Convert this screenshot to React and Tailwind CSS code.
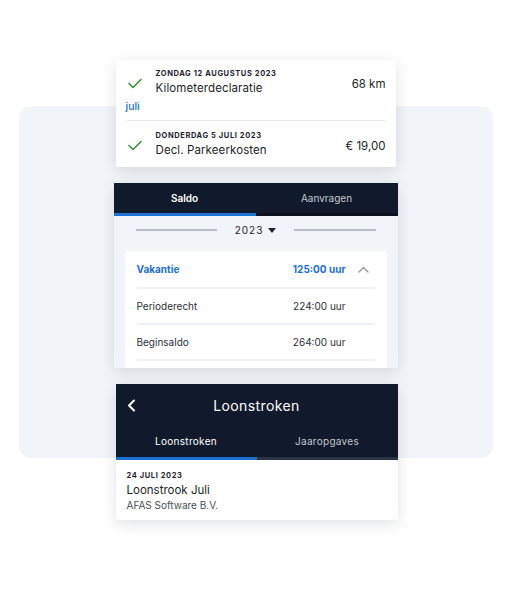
import React from "react";

// Three stacked AFAS-style app cards over a light rounded backdrop.
const font = { fontFamily: "Inter, 'Noto Sans', sans-serif" };

function Check() {
    return (
        <svg width="14" height="11" viewBox="0 0 14 11" fill="none">
            <path d="M1 5.5 L5 9.5 L13 1.5" stroke="#2f8a2f" strokeWidth="1.5" strokeLinecap="round" strokeLinejoin="round" />
        </svg>
    );
}

function Declaration({ date, title, amount, pt }) {
    return (
        <div className={`flex items-start ${pt}`}>
            <div className="w-[30px] pl-[2px] pt-[10px]">
                <Check />
            </div>
            <div className="flex-1">
                <div className="text-[7.5px] leading-[12px] font-bold tracking-[0.6px] text-[#1f2430]">{date}</div>
                <div className="text-[11.5px] leading-[16px] tracking-[0.1px] text-[#1b1f27]">{title}</div>
            </div>
            <div className="text-[11.5px] leading-[16px] text-[#1b1f27] mt-[8px]">{amount}</div>
        </div>
    );
}

function SaldoRow({ label, value, accent, chevron, h }) {
    const tone = accent ? "font-bold text-[#1c6fd1]" : "text-[#2a2f38]";
    return (
        <>
            <div className={`flex items-center ${h}`}>
                <div className={`flex-1 text-[10px] ${tone}`}>{label}</div>
                <div className={`text-[10px] ${tone}`}>{value}</div>
                <div className="w-[29px] flex justify-end pr-[6px]">
                    {chevron ? (
                        <svg width="11" height="7" viewBox="0 0 11 7" fill="none">
                            <path d="M1 6 L5.5 1.5 L10 6" stroke="#8b9099" strokeWidth="1.3" strokeLinecap="round" strokeLinejoin="round" />
                        </svg>
                    ) : null}
                </div>
            </div>
            <div className="h-[2px] bg-[#eef1f5]" />
        </>
    );
}

export default function App() {
    return (
        <div className="relative w-[511px] h-[600px] bg-white overflow-hidden" style={font}>
            {/* backdrop */}
            <div className="absolute left-[19px] top-[106px] w-[474px] h-[352px] rounded-[12px] bg-[#f1f4f8]" />

            <div className="relative flex flex-col items-center pt-[60px]">
                {/* Declaraties */}
                <div className="w-[280px] bg-white px-[10px] shadow-[0_4px_14px_rgba(20,30,50,0.13)]">
                    <div className="h-[40px]">
                        <Declaration pt="pt-[8px]" date="ZONDAG 12 AUGUSTUS 2023" title="Kilometerdeclaratie" amount="68 km" />
                    </div>
                    <div className="h-[14px] text-[10.5px] leading-[14px] font-medium text-[#1c6fd1]">juli</div>
                    <div className="mt-[6px] h-px bg-[#e6ebf1]" />
                    <div className="h-[46px]">
                        <Declaration pt="pt-[9px]" date="DONDERDAG 5 JULI 2023" title="Decl. Parkeerkosten" amount="€ 19,00" />
                    </div>
                </div>

                {/* Saldo */}
                <div className="mt-[16px] w-[284px] h-[185px] overflow-hidden bg-[#f1f4f8] shadow-[0_4px_14px_rgba(20,30,50,0.13)]">
                    <div className="flex h-[33px] bg-[#111a2c]">
                        <div className="flex-1 flex items-center justify-center border-b-[3px] border-[#1c72d4] text-[10px] font-semibold text-white">Saldo</div>
                        <div className="flex-1 flex items-center justify-center border-b-[3px] border-[#0b1220] text-[10px] text-[#c3c8d1]">Aanvragen</div>
                    </div>
                    <div className="flex items-center h-[28px] px-[22px] gap-[18px]">
                        <div className="flex-1 h-[2px] bg-[#b9bec6]" />
                        <div className="flex items-center gap-[5px] text-[10px] tracking-[1px] text-[#1f2430]">
                            2023
                            <svg width="8" height="5" viewBox="0 0 8 5"><path d="M0 0 H8 L4 5 Z" fill="#1f2430" /></svg>
                        </div>
                        <div className="flex-1 h-[2px] bg-[#b9bec6]" />
                    </div>
                    <div className="mt-[7px] mx-[11px] bg-white rounded-[4px] px-[12px]">
                        <SaldoRow h="h-[36px]" label="Vakantie" value="125:00 uur" accent chevron />
                        <SaldoRow h="h-[34px]" label="Perioderecht" value="224:00 uur" />
                        <SaldoRow h="h-[34px]" label="Beginsaldo" value="264:00 uur" />
                        <div className="h-[20px]" />
                    </div>
                </div>

                {/* Loonstroken */}
                <div className="mt-[16px] ml-[2px] w-[282px] bg-white shadow-[0_4px_14px_rgba(20,30,50,0.13)]">
                    <div className="bg-[#111a2c]">
                        <div className="relative flex items-center justify-center h-[42px] text-[14px] text-white tracking-[0.4px]">
                            <svg className="absolute left-[11px] top-[15px]" width="9" height="13" viewBox="0 0 9 13" fill="none">
                                <path d="M7 1.5 L2 6.5 L7 11.5" stroke="white" strokeWidth="2" strokeLinecap="round" strokeLinejoin="round" />
                            </svg>
                            Loonstroken
                        </div>
                        <div className="flex h-[34px]">
                            <div className="flex-1 flex items-center justify-center border-b-[3px] border-[#1c72d4] text-[10px] tracking-[0.3px] text-white">Loonstroken</div>
                            <div className="flex-1 flex items-center justify-center border-b-[3px] border-[#2b3344] text-[10px] tracking-[0.3px] text-[#c3c8d1]">Jaaropgaves</div>
                        </div>
                    </div>
                    <div className="px-[11px] pt-[10px] pb-[8px]">
                        <div className="text-[7.5px] leading-[12px] font-bold tracking-[0.6px] text-[#1f2430]">24 JULI 2023</div>
                        <div className="text-[11.5px] leading-[16px] text-[#1b1f27]">Loonstrook Juli</div>
                        <div className="text-[10px] leading-[14px] text-[#4a4f58]">AFAS Software B.V.</div>
                    </div>
                </div>
            </div>
        </div>
    );
}
